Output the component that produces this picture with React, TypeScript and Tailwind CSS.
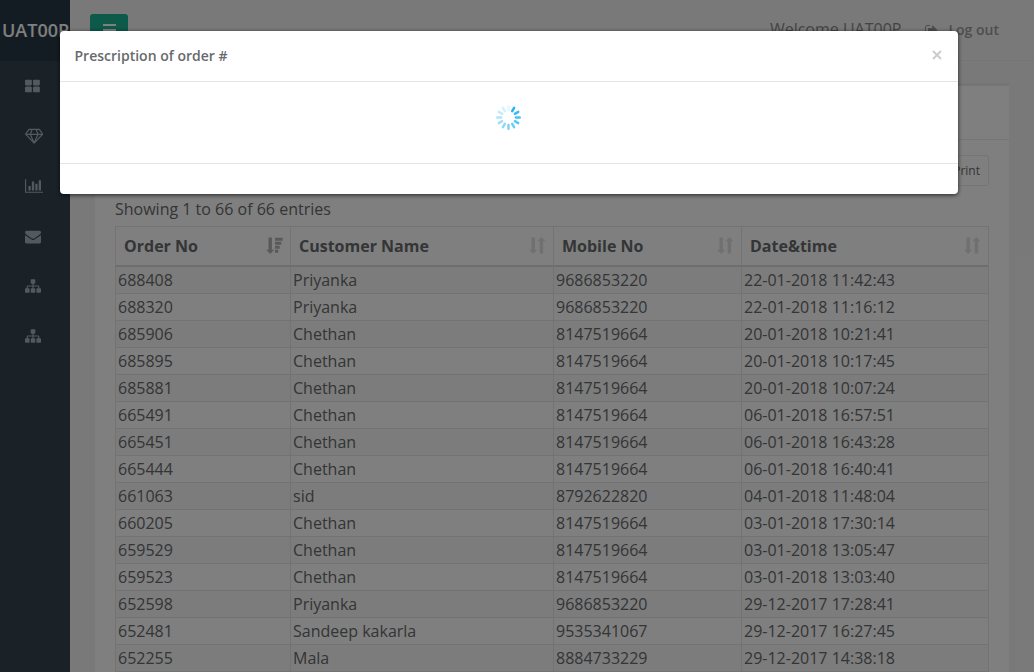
import React from "react";

const paths = {
  grid: "M832 1024v384q0 52-38 90t-90 38h-512q-52 0-90-38t-38-90v-384q0-52 38-90t90-38h512q52 0 90 38t38 90zm0-768v384q0 52-38 90t-90 38h-512q-52 0-90-38t-38-90v-384q0-52 38-90t90-38h512q52 0 90 38t38 90zm896 768v384q0 52-38 90t-90 38h-512q-52 0-90-38t-38-90v-384q0-52 38-90t90-38h512q52 0 90 38t38 90zm0-768v384q0 52-38 90t-90 38h-512q-52 0-90-38t-38-90v-384q0-52 38-90t90-38h512q52 0 90 38t38 90z",
  chart: "M640 896v512h-256v-512h256zm384-512v1024h-256v-1024h256zm1024 1152v128h-2048v-1536h128v1408h1920zm-640-896v768h-256v-768h256zm384-384v1152h-256v-1152h256z",
  envelope: "M1792 710v794q0 66-47 113t-113 47h-1472q-66 0-113-47t-47-113v-794q44 49 101 87 362 246 497 345 57 42 92.5 65.5t94.5 48 110 24.5h2q51 0 110-24.5t94.5-48 92.5-65.5q170-123 498-345 57-39 100-87zm0-294q0 79-49 151t-122 123q-376 261-468 325-10 7-42.5 31t-54 38.5-52 32.5-57.5 27-50 9h-2q-23 0-50-9t-57.5-27-52-32.5-54-38.5-42.5-31q-91-64-262-182.5t-205-142.5q-62-42-117-115.5t-55-136.5q0-78 41.5-130t118.5-52h1472q65 0 112.5 47t47.5 113z",
  sitemap: "M1792 1248v320q0 40-28 68t-68 28h-320q-40 0-68-28t-28-68v-320q0-40 28-68t68-28h96v-192h-512v192h96q40 0 68 28t28 68v320q0 40-28 68t-68 28h-320q-40 0-68-28t-28-68v-320q0-40 28-68t68-28h96v-192h-512v192h96q40 0 68 28t28 68v320q0 40-28 68t-68 28h-320q-40 0-68-28t-28-68v-320q0-40 28-68t68-28h96v-192q0-52 38-90t90-38h512v-192h-96q-40 0-68-28t-28-68v-320q0-40 28-68t68-28h320q40 0 68 28t28 68v320q0 40-28 68t-68 28h-96v192h512q52 0 90 38t38 90v192h96q40 0 68 28t28 68z",
  signOut: "M640 1440q0 4 1 20t.5 26.5-3 23.5-10 19.5-20.5 6.5h-320q-119 0-203.5-84.5t-84.5-203.5v-704q0-119 84.5-203.5t203.5-84.5h320q13 0 22.5 9.5t9.5 22.5q0 4 1 20t.5 26.5-3 23.5-10 19.5-20.5 6.5h-320q-66 0-113 47t-47 113v704q0 66 47 113t113 47h312l11.5 1 11.5 3 8 5.5 7 9 2 13.5zm928-544q0 26-19 45l-544 544q-19 19-45 19t-45-19-19-45v-288h-448q-26 0-45-19t-19-45v-384q0-26 19-45t45-19h448v-288q0-26 19-45t45-19 45 19l544 544q19 19 19 45z",
};

function Glyph({ d, box, cls }: { d: string; box: string; cls: string }) {
  return (
    <svg viewBox={box} fill="currentColor" className={cls}>
      <path d={d} />
    </svg>
  );
}

function Diamond() {
  return (
    <svg
      viewBox="0 0 18.3 16"
      fill="none"
      stroke="currentColor"
      strokeWidth="1.2"
      strokeLinejoin="round"
      className="h-4 w-[18.3px]"
    >
      <path d="M4 1.3H14.3L17.7 6.2L9.15 15.2L0.6 6.2zM0.6 6.3H17.7M7.2 1.3L5.3 6.3L9.15 15M11.1 1.3L13 6.3L9.15 15" />
    </svg>
  );
}

const menu = [
  <Glyph d={paths.grid} box="64 -64 1792 1792" cls="h-4 w-4" />,
  <Diamond />,
  <Glyph d={paths.chart} box="0 0 2048 1792" cls="h-4 w-[18.3px]" />,
  <Glyph d={paths.envelope} box="0 -64 1792 1792" cls="h-4 w-4" />,
  <Glyph d={paths.sitemap} box="0 0 1792 1792" cls="h-4 w-4" />,
  <Glyph d={paths.sitemap} box="0 0 1792 1792" cls="h-4 w-4" />,
];

const rows = [
  ["688408", "Priyanka", "9686853220", "22-01-2018 11:42:43"],
  ["688320", "Priyanka", "9686853220", "22-01-2018 11:16:12"],
  ["685906", "Chethan", "8147519664", "20-01-2018 10:21:41"],
  ["685895", "Chethan", "8147519664", "20-01-2018 10:17:45"],
  ["685881", "Chethan", "8147519664", "20-01-2018 10:07:24"],
  ["665491", "Chethan", "8147519664", "06-01-2018 16:57:51"],
  ["665451", "Chethan", "8147519664", "06-01-2018 16:43:28"],
  ["665444", "Chethan", "8147519664", "06-01-2018 16:40:41"],
  ["661063", "sid", "8792622820", "04-01-2018 11:48:04"],
  ["660205", "Chethan", "8147519664", "03-01-2018 17:30:14"],
  ["659529", "Chethan", "8147519664", "03-01-2018 13:05:47"],
  ["659523", "Chethan", "8147519664", "03-01-2018 13:03:40"],
  ["652598", "Priyanka", "9686853220", "29-12-2017 17:28:41"],
  ["652481", "Sandeep kakarla", "9535341067", "29-12-2017 16:27:45"],
  ["652255", "Mala", "8884733229", "29-12-2017 14:38:18"],
];

const columns = ["Order No", "Customer Name", "Mobile No", "Date&time"];

function SortIcon({ active }: { active: boolean }) {
  return (
    <svg
      viewBox="0 0 17 17"
      fill="currentColor"
      className={
        active ? "mb-0.5 h-[17px] w-[17px] opacity-50" : "mb-0.5 h-[17px] w-[17px] opacity-20"
      }
    >
      <path d="M2.5 0.5h3.4v12.2H8.2L4.2 17L0.2 12.7H2.5z" />
      {active ? (
        <path d="M9 0.7h7.7v3H9zM9 4.7h6.2v3H9zM9 8.7h4.7v3H9zM9 12.7h3.2v3H9z" />
      ) : (
        <path d="M10.7 16.5h3.4V4.3H16.4L12.4 0L8.4 4.3H10.7z" />
      )}
    </svg>
  );
}

function Spinner() {
  const blades = Array.from({ length: 12 }, (_, i) => i);
  return (
    <svg viewBox="-12.5 -12.5 25 25" className="h-[25px] w-[25px]">
      {blades.map((i) => (
        <line
          key={i}
          x1="0"
          y1="-7.4"
          x2="0"
          y2="-11.2"
          stroke="#1fb5f5"
          strokeWidth="2.5"
          strokeLinecap="round"
          opacity={i === 0 ? 0.1 : 1.06 - i * 0.08}
          transform={`rotate(${i * 30})`}
        />
      ))}
    </svg>
  );
}

function Sidebar() {
  return (
    <aside className="h-full w-[70px] shrink-0 bg-[#344451]">
      <div className="flex h-[61px] items-center overflow-hidden bg-[#263846] pb-0.5 pl-0.5 text-lg font-semibold whitespace-nowrap text-white">
        UAT00P
      </div>
      <nav className="flex flex-col text-[#a7b1c2]">
        {menu.map((icon, i) => (
          <a key={i} className="flex h-[50px] items-center pl-[25px]">
            {icon}
          </a>
        ))}
      </nav>
    </aside>
  );
}

export default function App() {
  return (
    <div className="relative h-[672px] w-[1034px] overflow-hidden bg-[#f3f3f4] font-['Open_Sans',sans-serif] text-base text-[#676a6c]">
      <div className="flex h-full">
        <Sidebar />
        <main className="flex min-w-0 flex-1 flex-col">
          <header className="flex h-[61px] shrink-0 items-start justify-between border-b border-[#e7eaec] pr-[35px] pl-5">
            <button className="mt-3.5 flex h-[33px] w-[38px] flex-col items-center gap-[3px] rounded-[3px] bg-[#1ab394] pt-2.5">
              <span className="h-0.5 w-[13px] bg-white" />
              <span className="h-0.5 w-[13px] bg-white" />
              <span className="h-0.5 w-[13px] bg-white" />
            </button>
            <div className="flex items-center pt-[17px]">
              <span className="text-base leading-6 text-[#888888]">Welcome UAT00P</span>
              <div className="ml-6 flex items-center pt-0.5">
                <svg viewBox="0 0 1792 1792" fill="#999c9e" className="h-3.5 w-3.5">
                  <path d={paths.signOut} />
                </svg>
                <span className="ml-[9px] text-sm font-semibold text-[#999c9e]">Log out</span>
              </div>
            </div>
          </header>

          <section className="mt-[22px] mr-[25px] ml-[25px] border-t-[3px] border-[#e7eaec] bg-white">
            <div className="h-[54px] border-b border-[#e7eaec]" />
            <div className="px-5 pt-[15px]">
              <div className="flex justify-end">
                <button className="h-[31px] rounded-[3px] border border-[#e7eaec] px-2 text-xs">
                  Print
                </button>
              </div>
              <div className="mt-[11px] mb-[5px] h-6 leading-6">Showing 1 to 66 of 66 entries</div>
              <div className="w-[874px] border-t border-r border-[#e7e7e7]">
                <div className="grid grid-cols-[175px_263px_188px_247px] bg-white font-bold">
                  {columns.map((label, i) => (
                    <div
                      key={label}
                      className="flex h-10 items-center justify-between border-b-2 border-l border-[#dddddd] border-l-[#e7e7e7] pr-[7px] pl-2"
                    >
                      {label}
                      <SortIcon active={i === 0} />
                    </div>
                  ))}
                </div>
                {rows.map((row, r) => (
                  <div
                    key={row[0]}
                    className={
                      r % 2 === 0
                        ? "grid grid-cols-[175px_263px_188px_247px] bg-[#f9f9f9]"
                        : "grid grid-cols-[175px_263px_188px_247px] bg-white"
                    }
                  >
                    {row.map((cell, c) => (
                      <div
                        key={c}
                        className="h-[27px] border-b border-l border-[#e7e7e7] pl-0.5 leading-[26px]"
                      >
                        {cell}
                      </div>
                    ))}
                  </div>
                ))}
              </div>
            </div>
          </section>
        </main>
      </div>

      <div className="absolute inset-0 bg-black/50">
        <div
          role="dialog"
          className="mt-[31px] ml-[60px] flex h-[163px] w-[898px] flex-col rounded-[4px] bg-white shadow-[0_1px_4px_rgba(0,0,0,0.7)]"
        >
          <div className="flex h-[51px] items-center justify-between border-b border-[#e5e5e5] pr-4 pl-[14.5px]">
            <h4 className="text-sm font-semibold">Prescription of order #</h4>
            <button aria-label="Close" className="mb-0.5 flex h-3 w-[11px] items-center justify-center">
              <svg viewBox="0 0 10 10" className="h-2.5 w-2.5" stroke="#cccccc" strokeWidth="2">
                <path d="M1 1l8 8M9 1l-8 8" />
              </svg>
            </button>
          </div>
          <div className="flex flex-1 items-start justify-center pt-[23px] pr-px">
            <Spinner />
          </div>
          <div className="h-[31px] border-t border-[#e5e5e5]" />
        </div>
      </div>
    </div>
  );
}
